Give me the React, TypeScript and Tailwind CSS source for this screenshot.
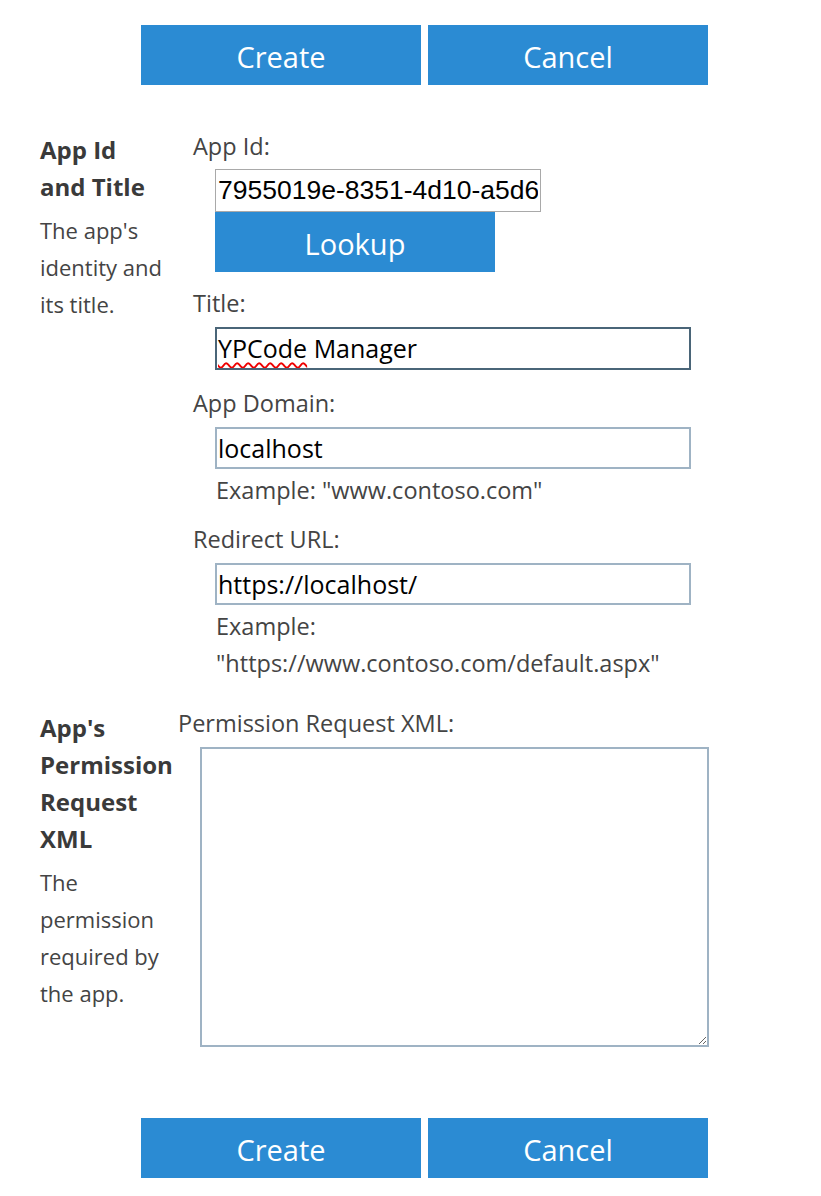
import React from "react";

function BlueButton({ label, className = "" }: { label: string; className?: string }) {
  return (
    <button
      type="button"
      className={`h-[60px] w-[280px] bg-[#2b8bd3] pt-[3px] text-[29px] leading-[57px] text-white ${className}`}
    >
      {label}
    </button>
  );
}

function ButtonRow({ className = "" }: { className?: string }) {
  return (
    <div className={`flex gap-[7px] pl-[141px] ${className}`}>
      <BlueButton label="Create" />
      <BlueButton label="Cancel" />
    </div>
  );
}

function Label({ children }: { children: React.ReactNode }) {
  return <div className="h-[36px] text-[23.5px] leading-[36px] text-[#444]">{children}</div>;
}

function Hint({ children }: { children: React.ReactNode }) {
  return <div className="ml-[23px] text-[23.5px] leading-[37px] text-[#444]">{children}</div>;
}

export default function App() {
  return (
    <div
      className="min-h-[1196px] w-full bg-white"
      style={{ fontFamily: '"Open Sans", "Noto Sans", sans-serif' }}
    >
      <ButtonRow className="pt-[25px]" />

      {/* Section 1 */}
      <div className="mt-[43px] flex">
        <div className="w-[193px] shrink-0 pl-[40px] pt-[3px]">
          <div className="text-[24px] font-bold leading-[37px] text-[#3a3a3a]">
            App Id
            <br />
            and Title
          </div>
          <div className="mt-[7px] text-[22px] leading-[37px] text-[#444]">
            The app's
            <br />
            identity and
            <br />
            its title.
          </div>
        </div>

        <div className="flex flex-col">
          <Label>App Id:</Label>
          <input
            readOnly
            value="7955019e-8351-4d10-a5d6-6a1c2b4f8e03"
            className="mt-[5px] ml-[22px] h-[43px] w-[326px] border border-[#a9a9a9] px-[2px] text-[26.5px] text-black outline-none"
            style={{ fontFamily: '"Liberation Sans", Arial, sans-serif' }}
          />
          <BlueButton label="Lookup" className="ml-[22px]" />

          <div className="mt-[13px]">
            <Label>Title:</Label>
          </div>
          <div className="mt-[6px] ml-[22px] flex h-[43px] w-[476px] items-center overflow-hidden border-2 border-[#4a6578] px-[1px] text-[25px] whitespace-nowrap text-black">
            <span className="underline decoration-[#e00] decoration-wavy decoration-[1.5px] underline-offset-[4px]">
              YPCode
            </span>
            <span>&nbsp;Manager</span>
          </div>

          <div className="mt-[15px]">
            <Label>App Domain:</Label>
          </div>
          <input
            readOnly
            value="localhost"
            className="mt-[6px] ml-[22px] h-[42px] w-[476px] border-2 border-[#9fb3c4] px-[1px] text-[25px] text-black outline-none"
          />
          <div className="mt-[3px]">
            <Hint>Example: "www.contoso.com"</Hint>
          </div>

          <div className="mt-[12px]">
            <Label>Redirect URL:</Label>
          </div>
          <input
            readOnly
            value="https://localhost/"
            className="mt-[6px] ml-[22px] h-[42px] w-[476px] border-2 border-[#9fb3c4] px-[1px] text-[25px] text-black outline-none"
          />
          <div className="mt-[3px]">
            <Hint>
              Example:
              <br />
              "https://www.contoso.com/default.aspx"
            </Hint>
          </div>
        </div>
      </div>

      {/* Section 2 */}
      <div className="mt-[23px] flex">
        <div className="w-[178px] shrink-0 pl-[40px] pt-[4px]">
          <div className="text-[24px] font-bold leading-[37px] text-[#3a3a3a]">
            App's
            <br />
            Permission
            <br />
            Request
            <br />
            XML
          </div>
          <div className="mt-[7px] text-[22px] leading-[37px] text-[#444]">
            The
            <br />
            permission
            <br />
            required by
            <br />
            the app.
          </div>
        </div>
        <div className="flex flex-col">
          <Label>Permission Request XML:</Label>
          <textarea
            className="mt-[6px] ml-[22px] h-[300px] w-[509px] border-2 border-[#9fb3c4] outline-none"
            defaultValue=""
          />
        </div>
      </div>

      <ButtonRow className="mt-[71px] pb-[18px]" />
    </div>
  );
}
